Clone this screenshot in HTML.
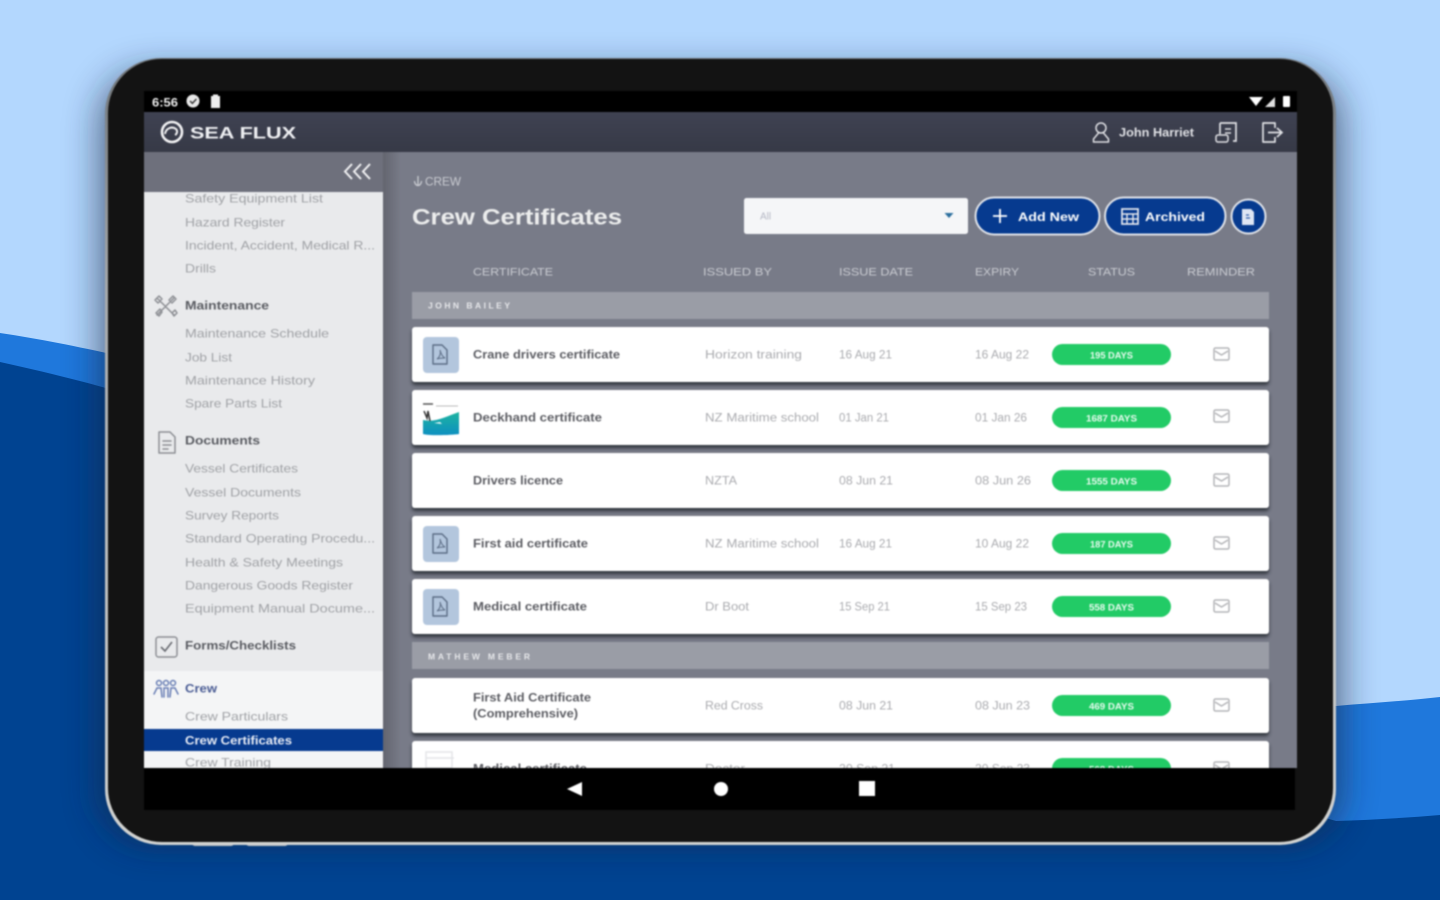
<!DOCTYPE html>
<html lang="en">
<head>
<meta charset="utf-8">
<title>Sea Flux - Crew Certificates</title>
<style>
html,body{margin:0;padding:0;width:1440px;height:900px;overflow:hidden;background:#b3d7fe}
svg{display:block}
text{font-family:"Liberation Sans",sans-serif;transform:translateY(.6px)}
.soft{filter:blur(.7px)}
.side{font-size:12px;fill:#a0a2a6}
.sh{font-size:12px;fill:#5a5c62;font-weight:bold}
.th{font-size:11px;fill:#c9cbd1}
.nm{font-size:11.5px;fill:#5c5d63;font-weight:bold}
.cell{font-size:11.5px;fill:#aaabaf}
.pill{font-size:9px;fill:#e8fbef;font-weight:bold;text-anchor:middle}
.grp{font-size:8.5px;fill:#e6e7ea;font-weight:bold}
.ic{fill:none;stroke:#8d8f94;stroke-width:1.5;stroke-linejoin:round;stroke-linecap:round}
</style>
</head>
<body>
<svg width="1440" height="900" viewBox="0 0 1440 900" xmlns="http://www.w3.org/2000/svg">
<defs>
<linearGradient id="sd" x1="0" x2="1" y1="0" y2="0"><stop offset="0" stop-color="#63656f"/><stop offset="1" stop-color="#787b88"/></linearGradient>
<linearGradient id="hd" x1="0" x2="0" y1="0" y2="1"><stop offset="0" stop-color="#3f4252"/><stop offset="1" stop-color="#363946"/></linearGradient>
<linearGradient id="edge" x1="0" x2="0" y1="0" y2="1"><stop offset="0" stop-color="#6f7478"/><stop offset=".3" stop-color="#a8abad"/><stop offset="1" stop-color="#d2d3d1"/></linearGradient>
<linearGradient id="sea" x1="0" x2="0" y1="0" y2="1"><stop offset="0" stop-color="#1db4a0"/><stop offset="1" stop-color="#0d8fc0"/></linearGradient>
<clipPath id="sideclip"><rect x="144" y="192" width="239" height="576"/></clipPath>
<clipPath id="mainclip"><rect x="383" y="152" width="914" height="616"/></clipPath>
<filter id="cardsh" x="-2%" y="-20%" width="104%" height="150%"><feDropShadow dx="0" dy="3" stdDeviation="1.800" flood-color="#2c2e36" flood-opacity=".9"/></filter>
<filter id="tabsh" x="-10%" y="-15%" width="120%" height="130%"><feGaussianBlur stdDeviation="18"/></filter>
</defs>

<!-- background -->
<rect width="1440" height="900" fill="#b3d7fe"/>
<path d="M0 333 C40 339 75 346 120 356 L720 560 L1336 706 C1370 703 1405 701 1440 697 V900 H0 Z" fill="#1f78dc"/>
<path d="M0 362 C40 371 75 379 120 392 L720 640 L1336 821 C1370 820 1405 818 1440 815 V900 H0 Z" fill="#004391"/>
<rect x="100" y="72" width="1241" height="770" rx="50" fill="#16233c" opacity=".62" filter="url(#tabsh)"/>

<g class="soft">
<!-- tablet -->
<rect x="192" y="840" width="42" height="6" rx="3" fill="#b9bcc1"/>
<rect x="246" y="840" width="42" height="6" rx="3" fill="#b9bcc1"/>
<rect x="105" y="58" width="1231" height="787" rx="56" fill="url(#edge)"/>
<rect x="108" y="59" width="1225" height="783" rx="54" fill="#131313"/>

<!-- screen -->
<rect x="144" y="91" width="1153" height="21" fill="#000"/>
<rect x="144" y="112" width="1153" height="40" fill="url(#hd)"/>
<rect x="383" y="152" width="914" height="616" fill="#787b88"/>
<rect x="383" y="152" width="18" height="616" fill="url(#sd)"/>
<rect x="144" y="768" width="1151" height="42" fill="#000"/>

<!-- status bar -->
<text x="152" y="106" font-size="11.500" font-weight="bold" fill="#eee" textLength="26" lengthAdjust="spacingAndGlyphs">6:56</text>
<circle cx="193" cy="101" r="6.500" fill="#e8e8e8"/>
<path d="M190 101l2.400 2.400 4-4.400" fill="none" stroke="#333" stroke-width="1.400"/>
<path d="M211 96h2v-1.500h5v1.500h2v12h-9z" fill="#eee"/>
<path d="M1249 97h14l-7 9z" fill="#fff"/>
<path d="M1265 107l10-10v10z" fill="#ddd"/>
<rect x="1283" y="96" width="7" height="11" rx="1" fill="#fff"/>

<!-- app header -->
<circle cx="172" cy="132" r="10" fill="none" stroke="#f1f1f3" stroke-width="2.600"/>
<path d="M165 134c1-6 7-8 11-5 2 2 1 5-1 6" fill="none" stroke="#f1f1f3" stroke-width="2"/>
<text x="190" y="138" font-size="17" font-weight="bold" fill="#eeeff2" textLength="106" lengthAdjust="spacingAndGlyphs">SEA FLUX</text>
<circle cx="1101" cy="128" r="5" fill="none" stroke="#dfe0e4" stroke-width="1.500"/>
<path d="M1098.500 133l-5 6v3h15v-3l-5-6" fill="none" stroke="#dfe0e4" stroke-width="1.500" stroke-linejoin="round"/>
<text x="1119" y="136" font-size="11.500" font-weight="bold" fill="#e0e1e5" textLength="75" lengthAdjust="spacingAndGlyphs">John Harriet</text>
<path d="M1220 123h16v18h-3M1220 123v11" fill="none" stroke="#dfe0e4" stroke-width="1.700"/>
<rect x="1216" y="135" width="12" height="7" rx="2" fill="none" stroke="#dfe0e4" stroke-width="1.500"/>
<path d="M1225 129h6M1225 133h6" stroke="#dfe0e4" stroke-width="1.500"/>
<path d="M1275 128v-5h-12v19h12v-5" fill="none" stroke="#dfe0e4" stroke-width="1.700" stroke-linejoin="round"/>
<path d="M1268 132.500h13M1277 128l5 4.500-5 4.500" fill="none" stroke="#dfe0e4" stroke-width="1.700"/>

<!-- sidebar -->
<rect x="144" y="192" width="239" height="479" fill="#e9eaec"/>
<rect x="144" y="671" width="239" height="97" fill="#f4f5f6"/>
<g clip-path="url(#sideclip)">
<text class="side" x="185" y="202" textLength="138" lengthAdjust="spacingAndGlyphs">Safety Equipment List</text>
<text class="side" x="185" y="226" textLength="100" lengthAdjust="spacingAndGlyphs">Hazard Register</text>
<text class="side" x="185" y="249" textLength="190" lengthAdjust="spacingAndGlyphs">Incident, Accident, Medical R...</text>
<text class="side" x="185" y="272" textLength="31" lengthAdjust="spacingAndGlyphs">Drills</text>
<text class="sh" x="185" y="309" textLength="84" lengthAdjust="spacingAndGlyphs">Maintenance</text>
<text class="side" x="185" y="337" textLength="144" lengthAdjust="spacingAndGlyphs">Maintenance Schedule</text>
<text class="side" x="185" y="361" textLength="47" lengthAdjust="spacingAndGlyphs">Job List</text>
<text class="side" x="185" y="384" textLength="130" lengthAdjust="spacingAndGlyphs">Maintenance History</text>
<text class="side" x="185" y="407" textLength="97" lengthAdjust="spacingAndGlyphs">Spare Parts List</text>
<text class="sh" x="185" y="444" textLength="75" lengthAdjust="spacingAndGlyphs">Documents</text>
<text class="side" x="185" y="472" textLength="113" lengthAdjust="spacingAndGlyphs">Vessel Certificates</text>
<text class="side" x="185" y="496" textLength="116" lengthAdjust="spacingAndGlyphs">Vessel Documents</text>
<text class="side" x="185" y="519" textLength="94" lengthAdjust="spacingAndGlyphs">Survey Reports</text>
<text class="side" x="185" y="542" textLength="190" lengthAdjust="spacingAndGlyphs">Standard Operating Procedu...</text>
<text class="side" x="185" y="566" textLength="158" lengthAdjust="spacingAndGlyphs">Health &amp; Safety Meetings</text>
<text class="side" x="185" y="589" textLength="168" lengthAdjust="spacingAndGlyphs">Dangerous Goods Register</text>
<text class="side" x="185" y="612" textLength="190" lengthAdjust="spacingAndGlyphs">Equipment Manual Docume...</text>
<text class="sh" x="185" y="649" textLength="111" lengthAdjust="spacingAndGlyphs">Forms/Checklists</text>
<text x="185" y="692" font-size="12" font-weight="bold" fill="#4a5c94" textLength="32" lengthAdjust="spacingAndGlyphs">Crew</text>
<text class="side" x="185" y="720" textLength="103" lengthAdjust="spacingAndGlyphs">Crew Particulars</text>
<rect x="144" y="729" width="239" height="22" fill="#063a8f"/>
<text x="185" y="744" font-size="12" font-weight="bold" fill="#e8ecf5" textLength="107" lengthAdjust="spacingAndGlyphs">Crew Certificates</text>
<text class="side" x="185" y="766" textLength="86" lengthAdjust="spacingAndGlyphs">Crew Training</text>
</g>
<!-- sidebar icons -->
<path class="ic" d="M157 298l17 17M174 298l-17 17M155 300l4-4 3 3-4 4zM172 313l3-3 2 3-3 3zM173 296l3 3-4 4-3-3zM156 313l4-4 2 3-3 4z"/>
<path class="ic" d="M159 432h11l5 5v16h-16z"/>
<path class="ic" d="M163 441h8M163 445h8M163 449h5"/>
<rect x="156" y="637" width="21" height="20" rx="2.500" class="ic"/>
<path d="M161 647l4 4 7-9" fill="none" stroke="#6a6c72" stroke-width="1.600"/>
<g fill="none" stroke="#6a7fb5" stroke-width="1.500" stroke-linecap="round">
<circle cx="159" cy="683" r="2.500"/><circle cx="166" cy="683" r="2.500"/><circle cx="173" cy="683" r="2.500"/>
<path d="M154 694l3-6h4l1 9M164 697v-9h4v9M170 697l1-9h4l3 6"/>
</g>

<!-- sidebar header -->
<rect x="144" y="152" width="239" height="40" fill="#6e707c"/>
<path d="M352 164l-7 7.500 7 7.500M361 164l-7 7.500 7 7.500M370 164l-7 7.500 7 7.500" fill="none" stroke="#f0f0f2" stroke-width="2"/>

<!-- content head -->
<path d="M418 176v9M414.500 181c0 3 2 4.500 3.500 4.500s3.500-1.500 3.500-4.500" fill="none" stroke="#c9cbd1" stroke-width="1.300"/>
<text x="425" y="185" font-size="11.500" fill="#c9cbd1" textLength="36" lengthAdjust="spacingAndGlyphs">CREW</text>
<text x="412" y="224" font-size="22" font-weight="bold" fill="#eceded" textLength="210" lengthAdjust="spacingAndGlyphs">Crew Certificates</text>

<rect x="744" y="198" width="224" height="36" rx="2.500" fill="#f5f6f8"/>
<text x="760" y="219" font-size="10" fill="#b5b8c4">All</text>
<path d="M944.500 213h9l-4.500 5z" fill="#2c6f9e"/>

<rect x="975.500" y="197.500" width="124" height="37" rx="18.500" fill="#063a8f" stroke="#dfe2e8" stroke-width="2"/>
<path d="M1000 209v14M993 216h14" stroke="#fff" stroke-width="1.800"/>
<text x="1018" y="220.500" font-size="11.500" font-weight="bold" fill="#fff" textLength="61" lengthAdjust="spacingAndGlyphs">Add New</text>
<rect x="1105" y="197.500" width="120.500" height="37" rx="18.500" fill="#063a8f" stroke="#dfe2e8" stroke-width="2"/>
<rect x="1122" y="209" width="16" height="15" fill="none" stroke="#e6e8ee" stroke-width="1.700"/>
<path d="M1122 214h16M1127 214v10M1133 214v10M1122 219h16" stroke="#e6e8ee" stroke-width="1.400"/>
<text x="1145" y="220.500" font-size="11.500" font-weight="bold" fill="#fff" textLength="60" lengthAdjust="spacingAndGlyphs">Archived</text>
<circle cx="1248.500" cy="216.500" r="17" fill="#063a8f" stroke="#dfe2e8" stroke-width="2"/>
<path d="M1242 209h9l3 3v13h-12z" fill="#dfe6f4"/>
<path d="M1246 218h4M1246 215h3" stroke="#2c5ba8" stroke-width="1.200"/>

<text class="th" x="473" y="275" textLength="80" lengthAdjust="spacingAndGlyphs">CERTIFICATE</text>
<text class="th" x="703" y="275" textLength="69" lengthAdjust="spacingAndGlyphs">ISSUED BY</text>
<text class="th" x="839" y="275" textLength="74" lengthAdjust="spacingAndGlyphs">ISSUE DATE</text>
<text class="th" x="975" y="275" textLength="44" lengthAdjust="spacingAndGlyphs">EXPIRY</text>
<text class="th" x="1088" y="275" textLength="47" lengthAdjust="spacingAndGlyphs">STATUS</text>
<text class="th" x="1187" y="275" textLength="68" lengthAdjust="spacingAndGlyphs">REMINDER</text>

<g clip-path="url(#mainclip)">
<!-- group 1 -->
<rect x="412" y="292" width="857" height="27" fill="#9a9da6"/>
<text class="grp" x="428" y="308" textLength="82" lengthAdjust="spacing">JOHN BAILEY</text>

<!-- rows -->
<rect x="412" y="327" width="857" height="55" rx="3" fill="#fff" filter="url(#cardsh)"/>
<rect x="412" y="390" width="857" height="55" rx="3" fill="#fff" filter="url(#cardsh)"/>
<rect x="412" y="453" width="857" height="55" rx="3" fill="#fff" filter="url(#cardsh)"/>
<rect x="412" y="516" width="857" height="55" rx="3" fill="#fff" filter="url(#cardsh)"/>
<rect x="412" y="579" width="857" height="55" rx="3" fill="#fff" filter="url(#cardsh)"/>

<rect x="412" y="642" width="857" height="27" fill="#9a9da6"/>
<text class="grp" x="428" y="659" textLength="102" lengthAdjust="spacing">MATHEW MEBER</text>
<rect x="412" y="678" width="857" height="55" rx="3" fill="#fff" filter="url(#cardsh)"/>
<rect x="412" y="741" width="857" height="55" rx="3" fill="#fff" filter="url(#cardsh)"/>

<!-- pdf tiles -->
<rect x="423" y="337" width="36" height="36" rx="4" fill="#b3c6dd"/>
<path d="M433 345h9l5 5v14h-14z" fill="none" stroke="#5c6d85" stroke-width="1.400" stroke-linejoin="round"/>
<path d="M437 359c3-2 4-6 3-9 1 4 3 7 5 8-3 0-5 0-8 1z" fill="none" stroke="#5c6d85" stroke-width="1"/>
<rect x="423" y="526" width="36" height="36" rx="4" fill="#b3c6dd"/>
<path d="M433 534h9l5 5v14h-14z" fill="none" stroke="#5c6d85" stroke-width="1.400" stroke-linejoin="round"/>
<path d="M437 548c3-2 4-6 3-9 1 4 3 7 5 8-3 0-5 0-8 1z" fill="none" stroke="#5c6d85" stroke-width="1"/>
<rect x="423" y="589" width="36" height="36" rx="4" fill="#b3c6dd"/>
<path d="M433 597h9l5 5v14h-14z" fill="none" stroke="#5c6d85" stroke-width="1.400" stroke-linejoin="round"/>
<path d="M437 611c3-2 4-6 3-9 1 4 3 7 5 8-3 0-5 0-8 1z" fill="none" stroke="#5c6d85" stroke-width="1"/>

<!-- thumbnail row 2 -->
<path d="M423 404h10" stroke="#555" stroke-width="1.500"/>
<path d="M436 406h22" stroke="#bbb" stroke-width="1"/>
<path d="M423 420c12 3 24-4 36-8v22c-6 1-30 2-36 0z" fill="url(#sea)"/>
<path d="M424 411l3 7 1-7 2 10" fill="none" stroke="#333" stroke-width="1.500"/>
<path d="M434 423l6-1 2 2z" fill="#fff"/>

<!-- thumbnail row 7 -->
<path d="M426 752h26v16h-26z" fill="none" stroke="#e4e5e8" stroke-width="1.500"/>
<path d="M426 758h28" stroke="#e4e5e8" stroke-width="1.500"/>

<!-- names -->
<text class="nm" x="473" y="358" textLength="147" lengthAdjust="spacingAndGlyphs">Crane drivers certificate</text>
<text class="nm" x="473" y="421" textLength="129" lengthAdjust="spacingAndGlyphs">Deckhand certificate</text>
<text class="nm" x="473" y="484" textLength="90" lengthAdjust="spacingAndGlyphs">Drivers licence</text>
<text class="nm" x="473" y="547" textLength="115" lengthAdjust="spacingAndGlyphs">First aid certificate</text>
<text class="nm" x="473" y="610" textLength="114" lengthAdjust="spacingAndGlyphs">Medical certificate</text>
<text class="nm" x="473" y="701" textLength="118" lengthAdjust="spacingAndGlyphs">First Aid Certificate</text>
<text class="nm" x="473" y="717" textLength="105" lengthAdjust="spacingAndGlyphs">(Comprehensive)</text>
<text class="nm" x="473" y="772" textLength="114" lengthAdjust="spacingAndGlyphs">Medical certificate</text>

<!-- issued by -->
<text class="cell" x="705" y="358" textLength="97" lengthAdjust="spacingAndGlyphs">Horizon training</text>
<text class="cell" x="705" y="421" textLength="114" lengthAdjust="spacingAndGlyphs">NZ Maritime school</text>
<text class="cell" x="705" y="484" textLength="32" lengthAdjust="spacingAndGlyphs">NZTA</text>
<text class="cell" x="705" y="547" textLength="114" lengthAdjust="spacingAndGlyphs">NZ Maritime school</text>
<text class="cell" x="705" y="610" textLength="44" lengthAdjust="spacingAndGlyphs">Dr Boot</text>
<text class="cell" x="705" y="709" textLength="58" lengthAdjust="spacingAndGlyphs">Red Cross</text>
<text class="cell" x="705" y="772" textLength="40" lengthAdjust="spacingAndGlyphs">Doctor</text>

<!-- dates -->
<text class="cell" x="839" y="358" textLength="53" lengthAdjust="spacingAndGlyphs">16 Aug 21</text>
<text class="cell" x="839" y="421" textLength="50" lengthAdjust="spacingAndGlyphs">01 Jan 21</text>
<text class="cell" x="839" y="484" textLength="54" lengthAdjust="spacingAndGlyphs">08 Jun 21</text>
<text class="cell" x="839" y="547" textLength="53" lengthAdjust="spacingAndGlyphs">16 Aug 21</text>
<text class="cell" x="839" y="610" textLength="51" lengthAdjust="spacingAndGlyphs">15 Sep 21</text>
<text class="cell" x="839" y="709" textLength="54" lengthAdjust="spacingAndGlyphs">08 Jun 21</text>
<text class="cell" x="839" y="772" textLength="56" lengthAdjust="spacingAndGlyphs">20 Sep 21</text>

<!-- expiry -->
<text class="cell" x="975" y="358" textLength="54" lengthAdjust="spacingAndGlyphs">16 Aug 22</text>
<text class="cell" x="975" y="421" textLength="52" lengthAdjust="spacingAndGlyphs">01 Jan 26</text>
<text class="cell" x="975" y="484" textLength="56" lengthAdjust="spacingAndGlyphs">08 Jun 26</text>
<text class="cell" x="975" y="547" textLength="54" lengthAdjust="spacingAndGlyphs">10 Aug 22</text>
<text class="cell" x="975" y="610" textLength="52" lengthAdjust="spacingAndGlyphs">15 Sep 23</text>
<text class="cell" x="975" y="709" textLength="55" lengthAdjust="spacingAndGlyphs">08 Jun 23</text>
<text class="cell" x="975" y="772" textLength="55" lengthAdjust="spacingAndGlyphs">20 Sep 23</text>

<!-- pills -->
<rect x="1052" y="344" width="119" height="21" rx="10.500" fill="#22cb66"/>
<text class="pill" x="1111.500" y="358" textLength="43" lengthAdjust="spacingAndGlyphs">195 DAYS</text>
<rect x="1052" y="407" width="119" height="21" rx="10.500" fill="#22cb66"/>
<text class="pill" x="1111.500" y="421" textLength="51" lengthAdjust="spacingAndGlyphs">1687 DAYS</text>
<rect x="1052" y="470" width="119" height="21" rx="10.500" fill="#22cb66"/>
<text class="pill" x="1111.500" y="484" textLength="51" lengthAdjust="spacingAndGlyphs">1555 DAYS</text>
<rect x="1052" y="533" width="119" height="21" rx="10.500" fill="#22cb66"/>
<text class="pill" x="1111.500" y="547" textLength="43" lengthAdjust="spacingAndGlyphs">187 DAYS</text>
<rect x="1052" y="596" width="119" height="21" rx="10.500" fill="#22cb66"/>
<text class="pill" x="1111.500" y="610" textLength="45" lengthAdjust="spacingAndGlyphs">558 DAYS</text>
<rect x="1052" y="695" width="119" height="21" rx="10.500" fill="#22cb66"/>
<text class="pill" x="1111.500" y="709" textLength="45" lengthAdjust="spacingAndGlyphs">469 DAYS</text>
<rect x="1052" y="758" width="119" height="21" rx="10.500" fill="#22cb66"/>
<text class="pill" x="1111.500" y="772" textLength="45" lengthAdjust="spacingAndGlyphs">568 DAYS</text>

<!-- reminder icons -->
<g fill="none" stroke="#b4b5b8" stroke-width="1.500" stroke-linejoin="round">
<rect x="1214" y="348" width="15" height="12" rx="1.500"/><path d="M1215 351l6.500 4 6.500-4"/>
<rect x="1214" y="410" width="15" height="12" rx="1.500"/><path d="M1215 413l6.500 4 6.500-4"/>
<rect x="1214" y="474" width="15" height="12" rx="1.500"/><path d="M1215 477l6.500 4 6.500-4"/>
<rect x="1214" y="537" width="15" height="12" rx="1.500"/><path d="M1215 540l6.500 4 6.500-4"/>
<rect x="1214" y="600" width="15" height="12" rx="1.500"/><path d="M1215 603l6.500 4 6.500-4"/>
<rect x="1214" y="699" width="15" height="12" rx="1.500"/><path d="M1215 702l6.500 4 6.500-4"/>
<rect x="1214" y="762" width="15" height="12" rx="1.500"/><path d="M1215 765l6.500 4 6.500-4"/>
</g>
</g>

<!-- android nav -->
<path d="M582 782v14l-15-7z" fill="#fff"/>
<circle cx="721" cy="789" r="7" fill="#fff"/>
<rect x="859" y="781" width="16" height="15" fill="#fff"/>
</g>
</svg>
</body>
</html>
